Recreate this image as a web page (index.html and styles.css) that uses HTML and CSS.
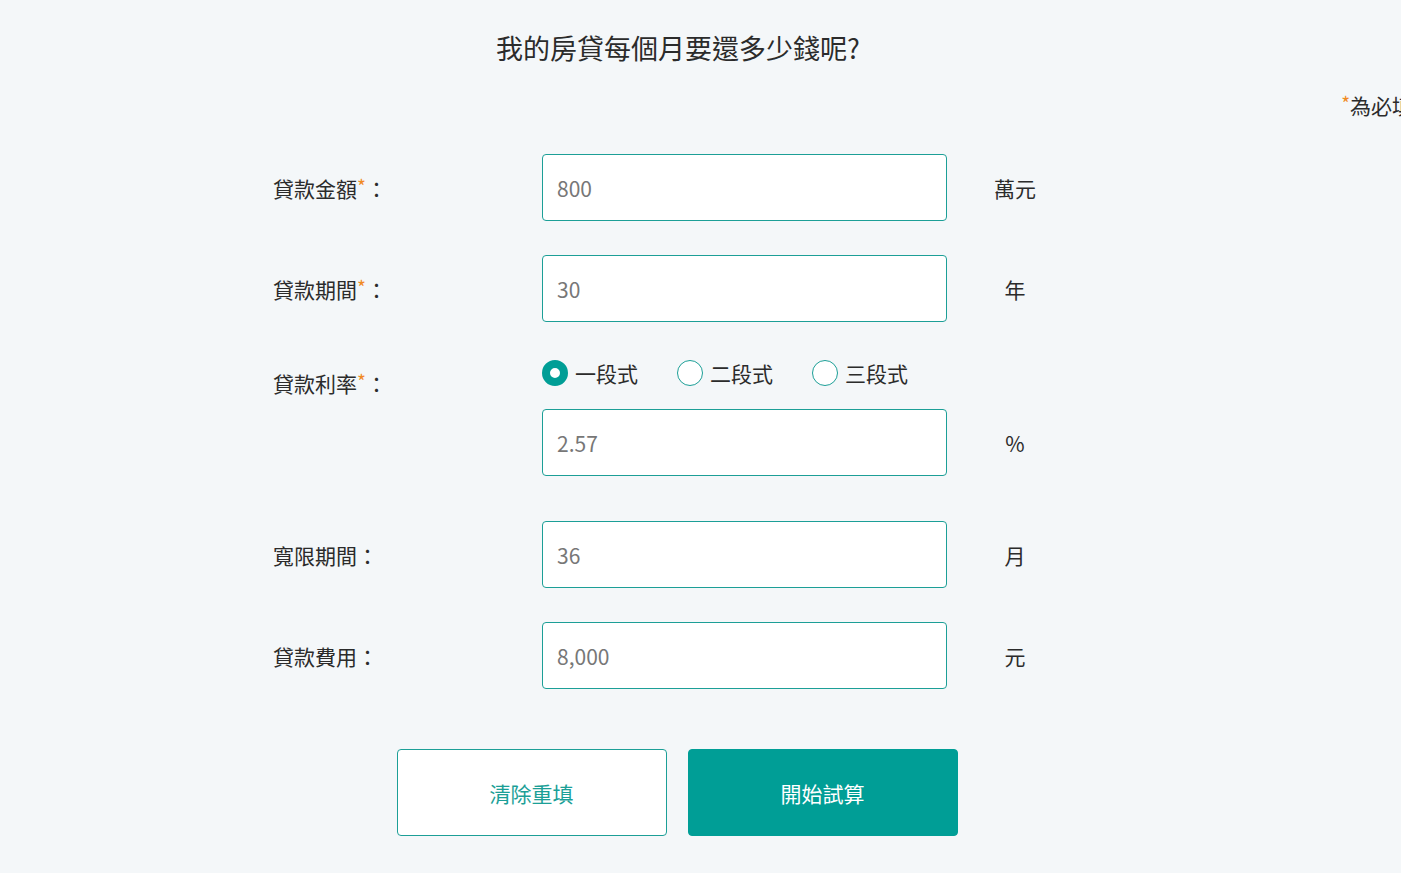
FILE: index.html
```html
<!DOCTYPE html>
<html lang="zh-Hant">
<head>
<meta charset="utf-8">
<title>房貸試算</title>
<link rel="stylesheet" href="styles.css">
</head>
<body>
<div class="page">
  <h1 class="title">我的房貸每個月要還多少錢呢?</h1>
  <div class="note"><span class="star">*</span>為必填</div>
  <form class="form">
    <div class="row">
      <label class="label">貸款金額<span class="star">*</span>：</label>
      <input class="field" type="text" value="800">
      <span class="unit">萬元</span>
    </div>
    <div class="row">
      <label class="label">貸款期間<span class="star">*</span>：</label>
      <input class="field" type="text" value="30">
      <span class="unit">年</span>
    </div>
    <div class="row row-rate">
      <label class="label label-rate">貸款利率<span class="star">*</span>：</label>
      <div class="rate-col">
        <div class="radios">
          <label class="radio"><input type="radio" name="stage" checked><span>一段式</span></label>
          <label class="radio"><input type="radio" name="stage"><span>二段式</span></label>
          <label class="radio"><input type="radio" name="stage"><span>三段式</span></label>
        </div>
        <input class="field" type="text" value="2.57">
      </div>
      <span class="unit unit-rate">%</span>
    </div>
    <div class="row">
      <label class="label">寬限期間：</label>
      <input class="field" type="text" value="36">
      <span class="unit">月</span>
    </div>
    <div class="row">
      <label class="label">貸款費用：</label>
      <input class="field" type="text" value="8,000">
      <span class="unit">元</span>
    </div>
  </form>
  <div class="actions">
    <button class="btn btn-outline" type="button">清除重填</button>
    <button class="btn btn-primary" type="button">開始試算</button>
  </div>
</div>
</body>
</html>
```
FILE: styles.css
```css
html, body {
  margin: 0;
  padding: 0;
  background: #f4f7f9;
  overflow: hidden;
}
body {
  font-family: "Noto Sans CJK TC", "Noto Sans", sans-serif;
  color: #2b2b2b;
}
.page {
  width: 1356px;
  padding-top: 28px;
}
.title {
  margin: 0;
  font-size: 27px;
  font-weight: 400;
  line-height: 39px;
  text-align: center;
  color: #2b2b2b;
}
.note {
  width: 1413px;
  margin-top: 23px;
  font-size: 21px;
  line-height: 30px;
  text-align: right;
  white-space: nowrap;
}
.star {
  display: inline-block;
  color: #f08a24;
  font-size: 19px;
  line-height: 1;
  vertical-align: top;
  margin-top: 3px;
}
.form {
  width: 810px;
  margin: 34px auto 0;
  display: flex;
  flex-direction: column;
  gap: 34px;
}
.row {
  display: grid;
  grid-template-columns: 269px 405px 136px;
  align-items: center;
}
.row-rate {
  align-items: start;
  margin-top: 3px;
  margin-bottom: 11px;
}
.label {
  font-size: 21px;
  line-height: 30px;
  white-space: nowrap;
}
.label-rate {
  padding-top: 9px;
}
.field {
  box-sizing: border-box;
  width: 405px;
  height: 67px;
  margin: 0;
  padding: 0 14px;
  border: 1px solid #1c9f97;
  border-radius: 4px;
  background: #fff;
  font-family: inherit;
  font-size: 21px;
  color: #777;
  outline: none;
}
.unit {
  text-align: center;
  font-size: 21px;
  line-height: 30px;
}
.unit-rate {
  align-self: end;
  padding-bottom: 18px;
}
.rate-col {
  display: flex;
  flex-direction: column;
  gap: 20px;
}
.radios {
  display: flex;
  gap: 39px;
  height: 30px;
  align-items: center;
  margin-top: -1px;
  margin-bottom: 1px;
}
.radio {
  display: flex;
  align-items: center;
  gap: 7px;
  font-size: 21px;
  line-height: 30px;
}
.radio input {
  appearance: none;
  -webkit-appearance: none;
  box-sizing: border-box;
  width: 26px;
  height: 26px;
  margin: 0;
  border: 1.5px solid #1c9f97;
  border-radius: 50%;
  background: #fff;
}
.radio input:checked {
  border: 8.5px solid #009e96;
}
.actions {
  display: flex;
  justify-content: center;
  gap: 21px;
  margin-top: 60px;
  padding-right: 2px;
}
.btn {
  box-sizing: border-box;
  width: 270px;
  height: 87px;
  border-radius: 4px;
  font-family: inherit;
  font-size: 21px;
}
.btn-outline {
  background: #fff;
  border: 1px solid #1c9f97;
  color: #1c9f97;
}
.btn-primary {
  background: #009e96;
  border: 1px solid #009e96;
  color: #fff;
}
```
